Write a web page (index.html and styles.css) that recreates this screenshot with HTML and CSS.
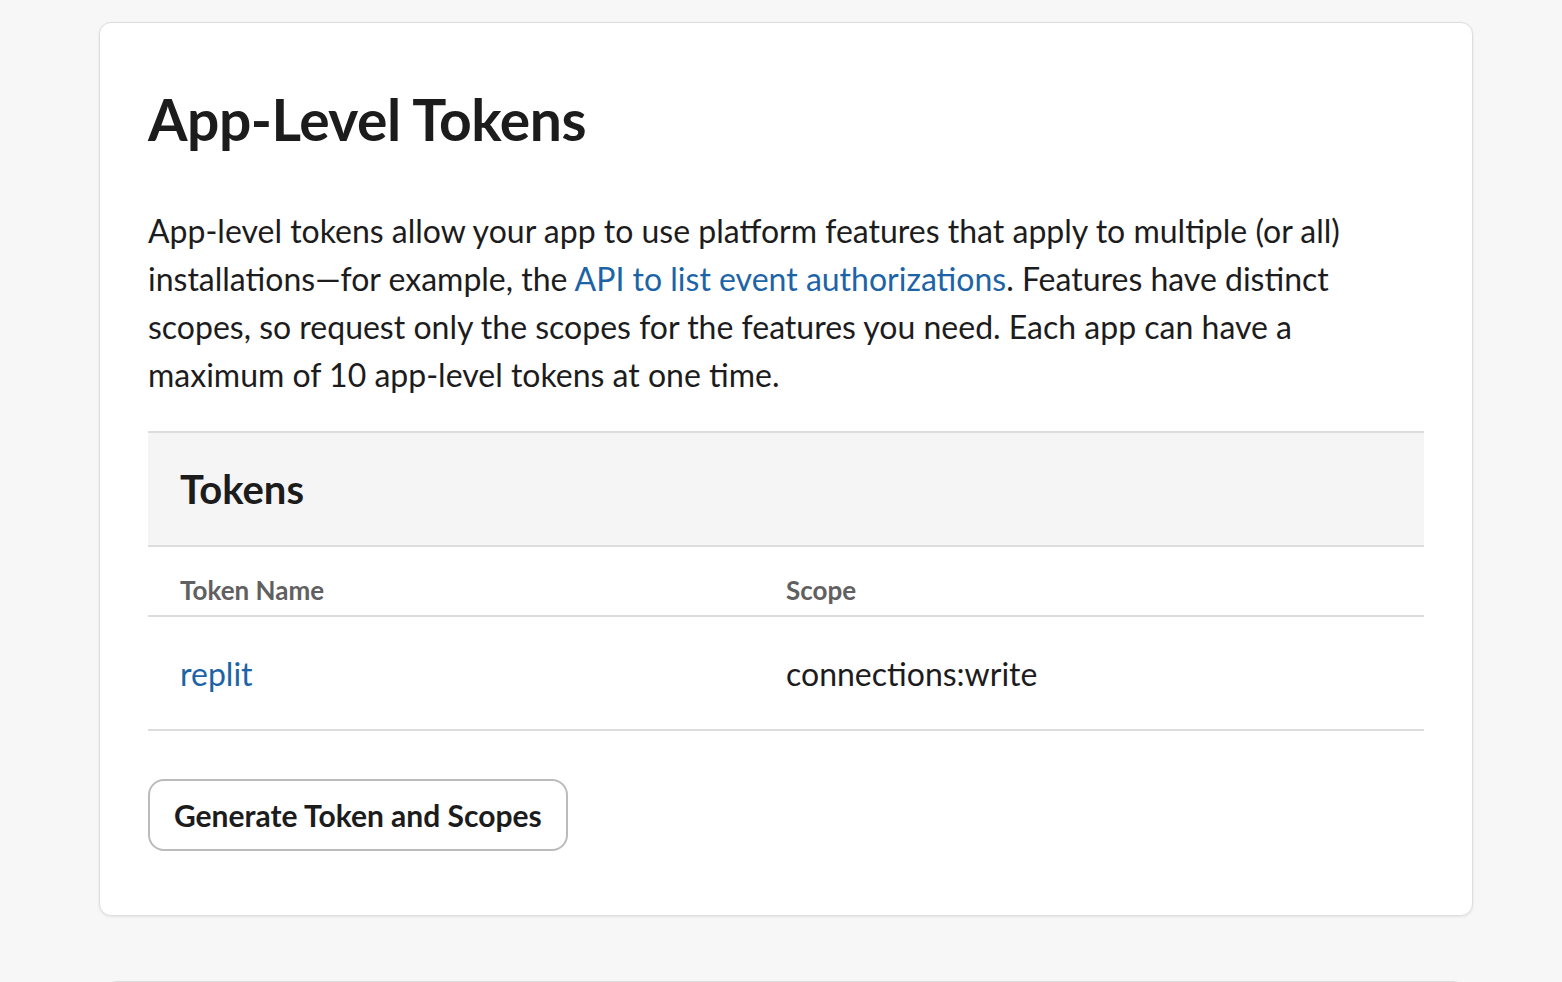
FILE: index.html
```html
<!DOCTYPE html>
<html lang="en">
<head>
<meta charset="utf-8">
<title>App-Level Tokens</title>
<link rel="stylesheet" href="styles.css">
</head>
<body>
<main class="page">
  <section class="card">
    <h1 class="title">App-Level Tokens</h1>
    <p class="intro">App-level tokens allow your app to use platform features that apply to multiple (or all) installations—for example, the <a class="link" href="#">API to list event authorizations</a>. Features have distinct scopes, so request only the scopes for the features you need. Each app can have a maximum of 10 app-level tokens at one time.</p>
    <div class="tokens">
      <div class="tokens-head">
        <h2 class="tokens-title">Tokens</h2>
      </div>
      <div class="row row-head">
        <div class="cell">Token Name</div>
        <div class="cell">Scope</div>
      </div>
      <div class="row row-data">
        <div class="cell"><a class="link" href="#">replit</a></div>
        <div class="cell">connections:write</div>
      </div>
    </div>
    <button class="btn" type="button">Generate Token and Scopes</button>
  </section>
  <section class="card card-next"></section>
</main>
</body>
</html>
```
FILE: styles.css
```css
html, body {
  margin: 0;
  padding: 0;
  background: #f7f7f7;
  font-family: Lato, "Noto Sans", sans-serif;
  color: #1d1c1d;
}

.page {
  padding: 22px 89px 0 99px;
}

.card {
  background: #fff;
  border: 1px solid #dddddd;
  border-radius: 12px;
  box-shadow: 0 1px 3px rgba(0, 0, 0, 0.08);
  padding: 62px 48px 64px;
}

.card-next {
  margin: 65px 8px 0 6px;
  height: 40px;
  padding: 0;
}

.title {
  margin: 0;
  font-size: 57px;
  line-height: 1.2;
  font-weight: 700;
  letter-spacing: -0.5px;
}

.intro {
  margin: 54px 0 32px;
  font-size: 32px;
  line-height: 48px;
}

.link {
  color: #1d64a6;
  text-decoration: none;
}

.tokens {
  border-top: 2px solid #dddddd;
  margin-bottom: 48px;
}

.tokens-head {
  background: #f5f5f5;
  border-bottom: 2px solid #dddddd;
  height: 112px;
  display: flex;
  align-items: center;
  padding: 0 32px;
}

.tokens-title {
  margin: 0;
  font-size: 40px;
  font-weight: 700;
}

.row {
  display: grid;
  grid-template-columns: 606px 1fr;
  border-bottom: 2px solid #dddddd;
  align-items: center;
}

.cell {
  padding-left: 32px;
}

.row-head {
  height: 50px;
  padding-top: 18px;
  font-size: 26px;
  font-weight: 700;
  color: #616061;
}

.row-data {
  height: 112px;
  font-size: 32px;
}

.btn {
  font-family: Lato, "Noto Sans", sans-serif;
  font-size: 30px;
  font-weight: 700;
  color: #1d1c1d;
  background: #fff;
  border: 2px solid #bbbbbb;
  border-radius: 16px;
  height: 72px;
  padding: 0 24px;
  cursor: pointer;
}
```
